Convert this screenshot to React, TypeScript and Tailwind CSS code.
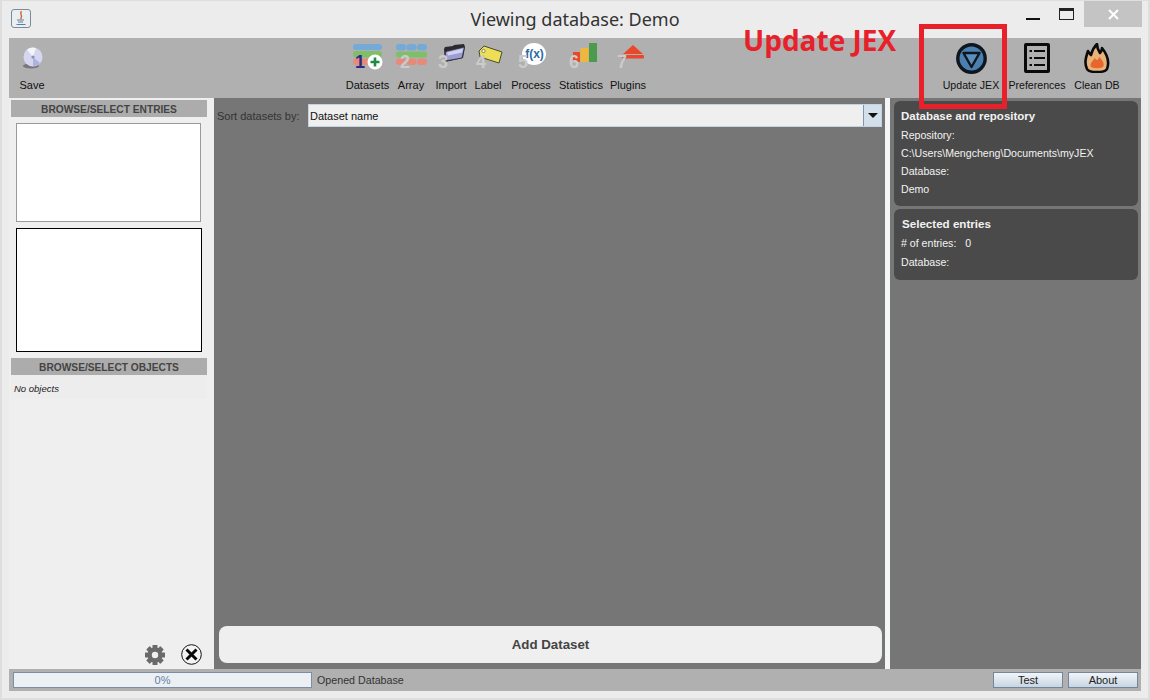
import type { ReactNode } from "react";

const TOOLBAR_LABEL = "text-[11px] leading-[13px] text-[#111] whitespace-nowrap";

function DatasetsIcon() {
  return (
    <svg className="mt-[6px]" width="30" height="26" viewBox="0 0 30 26">
      <rect x="0" y="0" width="29" height="6" rx="3" fill="#74a9d8" />
      <rect x="0" y="7" width="29" height="6.5" rx="3" fill="#7fbf6a" />
      <rect x="0" y="14.5" width="29" height="6.5" rx="3" fill="#e88a7a" />
      <circle cx="22" cy="18" r="7.5" fill="#fff" />
      <path d="M22 13.5v9M17.5 18h9" stroke="#1f8a45" strokeWidth="2.6" />
    </svg>
  );
}

function ArrayIcon() {
  return (
    <svg className="mt-[6px]" width="31" height="22" viewBox="0 0 31 22">
      {[0, 10.5, 21].map((x) => (
        <rect key={x} x={x} y="0" width="10" height="6.5" rx="3.2" fill="#74a9d8" />
      ))}
      <rect x="0" y="7.5" width="31" height="6" rx="2" fill="#7fbf6a" />
      {[0, 10.5, 21].map((x) => (
        <rect key={x} x={x} y="14.5" width="10" height="6.5" rx="3.2" fill="#e88a7a" />
      ))}
    </svg>
  );
}

function FolderIcon() {
  return (
    <svg className="mt-[6px] ml-[6px]" width="23" height="18" viewBox="0 0 23 18">
      <path d="M1 5l1-2 8-1 1-1 10-1 1 3-2 11-18 4z" fill="#2b2b2f" />
      <path d="M2.5 8l2-1 17-4-2.5 11-17 3z" fill="#9a9ed2" stroke="#26262c" strokeWidth="0.7" />
      <path d="M4 8.5l16-4-1 4-14 3z" fill="#d2d4ee" />
    </svg>
  );
}

function LabelIcon() {
  return (
    <svg className="mt-[7px] ml-[4px]" width="25" height="19" viewBox="0 0 25 19">
      <path d="M1 6l5-5 18 6-3 11L2 12z" fill="#ecdf55" stroke="#4b4a35" strokeWidth="1" />
      <circle cx="5.5" cy="6" r="1.6" fill="#fff" stroke="#4b4a35" strokeWidth="0.6" />
    </svg>
  );
}

function ProcessIcon() {
  return (
    <svg className="mt-[5px] ml-[6px]" width="24" height="22" viewBox="0 0 24 22">
      <ellipse cx="12" cy="11" rx="12" ry="11" fill="#fff" />
      <text x="12.5" y="15" textAnchor="middle" fontSize="12" fontFamily="Liberation Sans, sans-serif" fill="#2d6aa3" fontWeight="700">f(x)</text>
    </svg>
  );
}

function StatisticsIcon() {
  return (
    <svg className="mt-[5px] ml-[7px]" width="24" height="20" viewBox="0 0 24 20">
      <rect x="0" y="9" width="7" height="10" fill="#e8492e" />
      <rect x="7.5" y="5" width="8" height="14" fill="#efb83c" />
      <rect x="16" y="0" width="8" height="19" fill="#4c9a4e" />
    </svg>
  );
}

function PluginsIcon() {
  return (
    <svg className="mt-[7px] ml-[9px]" width="22" height="15" viewBox="0 0 22 15">
      <path d="M11 0l10 9H1z" fill="#e8492e" />
      <rect x="0" y="10" width="22" height="3.5" rx="1" fill="#e8492e" />
    </svg>
  );
}

function ToolbarItem({
  label,
  icon,
  width,
  num,
  numLeft,
  numColor = "text-[#cbcbcb]",
}: {
  label: string;
  icon: ReactNode;
  width: string;
  num: number;
  numLeft: string;
  numColor?: string;
}) {
  return (
    <div className={`flex shrink-0 flex-col items-center ${width}`}>
      <div className="relative flex h-[41px] w-full items-start justify-center">
        {icon}
        <span className={`absolute top-[15px] text-[18px] leading-[18px] font-bold ${numLeft} ${numColor}`}>{num}</span>
      </div>
      <span className={TOOLBAR_LABEL}>{label}</span>
    </div>
  );
}

function RightTool({ label, width, children }: { label: string; width: string; children: ReactNode }) {
  return (
    <div className={`flex shrink-0 flex-col items-center ${width}`}>
      <div className="flex h-[41px] items-start pt-[5px]">{children}</div>
      <span className="text-[10.6px] leading-[13px] whitespace-nowrap text-[#111]">{label}</span>
    </div>
  );
}

function SectionHeading({ children }: { children: ReactNode }) {
  return (
    <div className="flex h-[17px] w-[196px] shrink-0 items-center justify-center bg-[#acacac] pt-[2px] text-[10.2px] font-bold text-[#444]">
      {children}
    </div>
  );
}

function GearIcon() {
  const teeth = [0, 45, 90, 135];
  return (
    <svg width="20" height="20" viewBox="0 0 20 20">
      {teeth.map((deg) => (
        <rect key={deg} x="7.5" y="0" width="5" height="20" rx="0.6" fill="#6a6a6a" transform={`rotate(${deg} 10 10)`} />
      ))}
      <circle cx="10" cy="10" r="7.4" fill="#6a6a6a" />
      <circle cx="10" cy="10" r="3.2" fill="#efefef" />
    </svg>
  );
}

export default function App() {
  return (
    <div className="relative flex h-[700px] w-[1150px] flex-col overflow-hidden bg-[#ececec] px-[9px] pb-[9px] font-['Liberation_Sans',Arial,sans-serif]">
      <header className="relative flex h-[38px] shrink-0 items-center justify-center">
        <div className="absolute top-[9px] left-[2px] flex h-[19px] w-[20px] items-center justify-center rounded-[3px] border border-[#7d8b96] bg-[#e8eef2]">
          <svg width="12" height="15" viewBox="0 0 12 15">
            <path d="M6.5 0C4 3 8.5 4.5 5.5 8" stroke="#d9652b" strokeWidth="1.4" fill="none" />
            <path d="M2 9h7M3 11h5M1.5 13.5h9" stroke="#5a7d9a" strokeWidth="1" />
          </svg>
        </div>
        <span className="text-[18px] leading-none text-[#333] font-['Noto_Sans',sans-serif]">Viewing database: Demo</span>
        <div className="absolute top-[1px] right-[-1px] flex items-start">
          <div className="mt-[17px] mr-[19px] h-[2px] w-[14px] bg-[#111]" />
          <div className="mt-[7px] mr-[10px] h-[12px] w-[15px] border border-t-[3px] border-[#222]" />
          <div className="flex h-[26px] w-[58px] items-center justify-center bg-[#c4c4c4]">
            <svg width="11" height="11" viewBox="0 0 11 11"><path d="M1 1l9 9M10 1l-9 9" stroke="#fff" strokeWidth="2" /></svg>
          </div>
        </div>
      </header>

      <div className="flex h-[60px] shrink-0 items-start bg-[#b0b0b0] pr-[16px]">
        <div className="flex w-[46px] shrink-0 flex-col items-center pt-[8px]">
          <svg width="24" height="24" viewBox="0 0 24 24">
            <ellipse cx="11" cy="20" rx="8" ry="2.5" fill="#777" />
            <circle cx="13" cy="11" r="9.5" fill="#d5d7f0" />
            <path d="M13 11L7 3.5A9.5 9.5 0 0 1 16 2z" fill="#f4f4fb" />
            <path d="M13 11l7 6a9.5 9.5 0 0 1-7 3.5z" fill="#aeb2de" />
            <circle cx="13" cy="11" r="1.6" fill="#8e90ae" />
          </svg>
          <span className={`mt-[9px] ${TOOLBAR_LABEL}`}>Save</span>
        </div>
        <div className="ml-[290px] flex items-start">
          <ToolbarItem label="Datasets" width="w-[45px]" num={1} numLeft="left-[10px]" numColor="text-[#2f2a80]" icon={<DatasetsIcon />} />
          <ToolbarItem label="Array" width="w-[42px]" num={2} numLeft="left-[10px]" icon={<ArrayIcon />} />
          <ToolbarItem label="Import" width="w-[38px]" num={3} numLeft="left-[6px]" icon={<FolderIcon />} />
          <ToolbarItem label="Label" width="w-[36px]" num={4} numLeft="left-[6px]" icon={<LabelIcon />} />
          <ToolbarItem label="Process" width="w-[50px]" num={5} numLeft="left-[12px]" icon={<ProcessIcon />} />
          <ToolbarItem label="Statistics" width="w-[50px]" num={6} numLeft="left-[13px]" icon={<StatisticsIcon />} />
          <ToolbarItem label="Plugins" width="w-[44px]" num={7} numLeft="left-[11px]" icon={<PluginsIcon />} />
        </div>
        <div className="ml-auto flex items-start">
          <RightTool label="Update JEX" width="w-[68px]">
            <svg width="31" height="31" viewBox="0 0 31 31">
              <circle cx="15.5" cy="15.5" r="13.7" fill="#4a7fb0" stroke="#10161d" strokeWidth="3.4" />
              <path d="M7.5 10h16l-8 14z" fill="#5a90c0" stroke="#10161d" strokeWidth="2.4" strokeLinejoin="round" />
            </svg>
          </RightTool>
          <RightTool label="Preferences" width="w-[64px]">
            <svg width="26" height="30" viewBox="0 0 26 30">
              <rect x="1.5" y="1.5" width="23" height="27" rx="0.5" fill="#b0b0b0" stroke="#0a0a0a" strokeWidth="3" />
              <path d="M5.5 8h2.5M10 8h11M5.5 15h2.5M10 15h11M5.5 22h2.5M10 22h11" stroke="#0a0a0a" strokeWidth="2.2" />
            </svg>
          </RightTool>
          <RightTool label="Clean DB" width="w-[56px]">
            <svg width="26" height="30" viewBox="0 0 26 30">
              <path d="M3 26C0 20 2 14 4 8c1 2 2 3 3 4 1-4 3-8 6-11 0 4 1 6 3 9 1-1 2-3 2-5 4 5 8 13 5 21-2 4-18 4-20 0z" fill="#e9b27a" stroke="#0a0a0a" strokeWidth="2.6" strokeLinejoin="round" />
              <path d="M6.5 23c0-4 3-5 4-8 1 1 2 2 3 2 1-1 1-2 2-3 2 3 5 5 4 9-1 3-12 3-13 0z" fill="#e6662b" />
            </svg>
          </RightTool>
        </div>
      </div>

      <div className="flex min-h-0 flex-1">
        <aside className="flex w-[205px] shrink-0 flex-col bg-[#efefef] pt-[2px] pr-[1px] pl-[2px]">
          <SectionHeading>BROWSE/SELECT ENTRIES</SectionHeading>
          <div className="mt-[6px] ml-[5px] h-[99px] w-[185px] border border-[#9a9a9a] bg-white" />
          <div className="mt-[6px] ml-[5px] h-[124px] w-[186px] border border-black bg-white" />
          <div className="mt-[6px]">
            <SectionHeading>BROWSE/SELECT OBJECTS</SectionHeading>
          </div>
          <div className="flex h-[24px] w-[196px] items-center bg-[#ededed] pt-[4px] pl-[3px] text-[9.5px] text-[#222] italic">No objects</div>
          <div className="mt-auto flex items-center justify-end gap-[16px] pr-[11px] pb-[4px]">
            <GearIcon />
            <svg width="21" height="21" viewBox="0 0 21 21">
              <circle cx="10.5" cy="10.5" r="9.8" fill="#f4f4f4" stroke="#111" strokeWidth="1" />
              <path d="M5.5 5.5l10 10M15.5 5.5l-10 10" stroke="#0a0a0a" strokeWidth="3" />
            </svg>
          </div>
        </aside>

        <main className="flex min-w-0 flex-1 flex-col bg-[#767676] px-[3px] py-[6px]">
          <div className="flex h-[23px] items-center">
            <span className="w-[91px] shrink-0 pt-[1px] text-[11px] text-[#333]">Sort datasets by:</span>
            <div className="flex h-[23px] flex-1 border border-[#c4d3e2] bg-[#efefef]">
              <span className="flex-1 pl-[1px] text-[11px] leading-[22px] text-[#111]">Dataset name</span>
              <span className="flex w-[18px] items-center justify-center border-l border-[#7f97ad] bg-[#d3e0eb]">
                <span className="h-0 w-0 border-x-[5px] border-t-[5px] border-x-transparent border-t-[#111]" />
              </span>
            </div>
          </div>
          <button type="button" className="mt-auto ml-[2px] h-[37px] rounded-[8px] bg-[#efefef] text-[13.3px] font-bold text-[#444]">Add Dataset</button>
        </main>

        <div className="w-[5px] shrink-0 bg-[#f4f6f8]" />

        <aside className="flex w-[251px] shrink-0 flex-col gap-[3px] bg-[#767676] py-[3px] pr-[3px] pl-[4px]">
          <section className="h-[105px] rounded-[6px] bg-[#4a4a4a] px-[7px] pt-[8px] text-[10.6px] text-[#f2f2f2]">
            <div className="mb-[3px] text-[11.5px] leading-[14px] font-bold">Database and repository</div>
            <div className="leading-[18px]">Repository:</div>
            <div className="leading-[18px]">C:\Users\Mengcheng\Documents\myJEX</div>
            <div className="leading-[18px]">Database:</div>
            <div className="leading-[18px]">Demo</div>
          </section>
          <section className="h-[71px] rounded-[6px] bg-[#4a4a4a] px-[7px] pt-[8px] text-[10.6px] text-[#f2f2f2]">
            <div className="mb-[3px] pl-[1px] text-[11.6px] leading-[14px] font-bold">Selected entries</div>
            <div className="leading-[19px]"># of entries:&nbsp;&nbsp; 0</div>
            <div className="leading-[19px]">Database:</div>
          </section>
        </aside>
      </div>

      <footer className="flex h-[22px] shrink-0 items-center bg-[#b0b0b0] pr-[3px] pl-[4px]">
        <div className="flex h-[16px] w-[299px] items-center justify-center border border-[#7b8ea5] bg-[#ecf0f3] pt-[1px] text-[11px] text-[#6580ac]">0%</div>
        <span className="ml-[5px] pt-[1px] text-[10.7px] text-[#333]">Opened Database</span>
        <button type="button" className="ml-auto h-[16px] w-[70px] border border-[#74869a] bg-gradient-to-b from-[#f2f5f8] to-[#c7d5e3] pt-[1px] text-[11px] leading-none text-[#222]">Test</button>
        <button type="button" className="ml-[5px] h-[16px] w-[70px] border border-[#74869a] bg-gradient-to-b from-[#f2f5f8] to-[#c7d5e3] pt-[1px] text-[11px] leading-none text-[#222]">About</button>
      </footer>

      <span className="absolute top-[23px] left-[743px] text-[28px] leading-[34px] font-bold text-[#e8202a] font-['Open_Sans',sans-serif]">Update JEX</span>
      <div className="pointer-events-none absolute top-[24px] left-[919px] h-[85px] w-[88px] border-[5px] border-[#e8202a]" />
      <div className="pointer-events-none absolute inset-0 border-x-2 border-t border-b-2 border-[#dedede]" />
    </div>
  );
}
